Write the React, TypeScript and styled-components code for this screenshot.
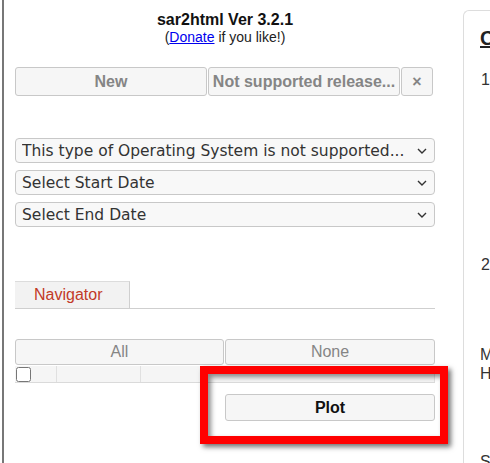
import styled, { createGlobalStyle } from 'styled-components';

const GlobalStyle = createGlobalStyle`
  html, body {
    margin: 0;
    padding: 0;
    background: #fff;
    overflow: hidden;
  }
  body {
    font-family: "Liberation Sans", Arial, sans-serif;
    color: #222;
  }
`;

const Page = styled.div`
  display: flex;
  align-items: flex-start;
  height: 463px;
  overflow: hidden;
`;

const Sidebar = styled.div`
  position: relative;
  flex: 0 0 auto;
  width: 420px;
  height: 463px;
  margin-left: 2px;
  padding: 10px 11px 0;
  border-left: 2px solid #777;
`;

const Title = styled.div`
  text-align: center;
  font-size: 16px;
  line-height: 19px;
  font-weight: bold;
  color: #111;
`;

const Sub = styled.div`
  text-align: center;
  font-size: 14px;
  line-height: 17px;
  color: #222;
  a {
    color: #0000ee;
    text-decoration: underline;
  }
`;

const ButtonRow = styled.div<{ $cols: string; $top: number }>`
  display: grid;
  grid-template-columns: ${(p) => p.$cols};
  gap: 1px;
  margin-top: ${(p) => p.$top}px;
`;

const Button = styled.button<{ $bold?: boolean; $dark?: boolean; $h?: number }>`
  box-sizing: border-box;
  height: ${(p) => p.$h ?? 26}px;
  margin: 0;
  padding: 0 3px;
  border: 1px solid #c8c8c8;
  border-radius: 3px;
  background: #f6f6f6;
  color: ${(p) => (p.$dark ? '#111' : '#858585')};
  font-family: "Liberation Sans", Arial, sans-serif;
  font-size: 16px;
  font-weight: ${(p) => (p.$bold ? 'bold' : 'normal')};
  white-space: nowrap;
  overflow: hidden;
  text-overflow: ellipsis;
`;

const CloseButton = styled(Button)`
  font-size: 16px;
`;

const SelectStack = styled.div`
  display: flex;
  flex-direction: column;
  gap: 7px;
  margin-top: 42px;
`;

const SelectWrap = styled.div`
  position: relative;
  width: 420px;
  height: 25px;
`;

const Select = styled.select`
  box-sizing: border-box;
  appearance: none;
  width: 100%;
  height: 100%;
  margin: 0;
  padding: 0 26px 0 6px;
  border: 1px solid #c8c8c8;
  border-radius: 4px;
  background: #f8f8f8;
  color: #333;
  font-family: "DejaVu Sans", sans-serif;
  font-size: 15.5px;
  text-overflow: ellipsis;
`;

const Chevron = styled.svg`
  position: absolute;
  right: 8px;
  top: 10px;
  width: 10px;
  height: 6px;
  pointer-events: none;
`;

const Tabs = styled.div`
  display: flex;
  margin-top: 54px;
  border-bottom: 1px solid #cfcfcf;
`;

const Tab = styled.div`
  box-sizing: border-box;
  width: 115px;
  height: 27px;
  padding-left: 19px;
  border-top: 1px solid #dcdcdc;
  border-right: 1px solid #cfcfcf;
  background: #f2f2f2;
  color: #c23a28;
  font-size: 16px;
  line-height: 26px;
`;

const TableRow = styled.div`
  display: grid;
  grid-template-columns: 42px 84px 1fr;
  height: 16px;
  margin-top: 1px;
  background: #f5f5f5;
  border-bottom: 1px solid #dadada;
`;

const Cell = styled.div`
  display: flex;
  align-items: center;
  border-right: 1px solid #e0e0e0;
`;

const Check = styled.input`
  box-sizing: border-box;
  width: 15px;
  height: 15px;
  margin: 0 0 0 1px;
`;

const PlotRow = styled.div`
  display: grid;
  grid-template-columns: 209px 210px;
  gap: 1px;
  margin-top: 11px;
`;

const Highlight = styled.div`
  position: absolute;
  left: 196px;
  top: 366px;
  width: 232px;
  height: 62px;
  border: 8px solid #ff0000;
  box-shadow: 3px 3px 5px rgba(0, 0, 0, 0.55), inset 3px 3px 5px rgba(0, 0, 0, 0.45);
  pointer-events: none;
`;

const Help = styled.div`
  flex: 0 0 auto;
  width: 420px;
  height: 460px;
  margin: 10px 0 0 17px;
  padding: 16px 0 0 16px;
  border-left: 1px solid #dddddd;
  border-top: 1px solid #dddddd;
  border-top-left-radius: 6px;
  font-size: 16px;
  line-height: 18.5px;
  color: #333;
`;

const HelpTitle = styled.div`
  font-size: 20px;
  line-height: 23px;
  font-weight: bold;
  text-decoration: underline;
  color: #222;
`;

const Item = styled.div<{ $top: number }>`
  display: grid;
  grid-template-columns: 24px 1fr;
  margin-top: ${(p) => p.$top}px;
`;

const Marker = styled.span`
  padding-left: 1px;
`;

const Line = styled.div`
  white-space: nowrap;
`;

const Para = styled.div<{ $top: number; $indent?: number }>`
  margin-top: ${(p) => p.$top}px;
  padding-left: ${(p) => p.$indent ?? 0}px;
`;

const stepOne = [
  'Collect sar data from your server with sar2ascii',
  'tool and upload the generated archive here.',
  'The archive must include sar data files',
  'and the hostname, OS type and release.',
  '',
  'sar2ascii is in the sar2html package',
  'and can be run as root on the server.',
  '',
  'Supported: HPUX, Linux, Solaris',
  'and AIX operating systems.'
];

const stepTwo = [
  'Select the host, start date and end date',
  'then choose the graphs to draw from the',
  'navigator and click the Plot button.',
  ''
];

function DateSelect({ label }: { label: string }) {
  return (
    <SelectWrap>
      <Select defaultValue={label}>
        <option value={label}>{label}</option>
      </Select>
      <Chevron viewBox="0 0 10 6">
        <path d="M1 1 L5 5 L9 1" fill="none" stroke="#333" strokeWidth="1.4" />
      </Chevron>
    </SelectWrap>
  );
}

export default function App() {
  return (
    <>
      <GlobalStyle />
      <Page>
        <Sidebar>
          <Title>sar2html Ver 3.2.1</Title>
          <Sub>
            (<a href="#donate">Donate</a> if you like!)
          </Sub>

          <ButtonRow $cols="192px 192px 32px" $top={21}>
            <Button $bold $h={29}>New</Button>
            <Button $bold $h={29}>Not supported release...</Button>
            <CloseButton $bold $h={29}>×</CloseButton>
          </ButtonRow>

          <SelectStack>
            <DateSelect label="This type of Operating System is not supported..." />
            <DateSelect label="Select Start Date" />
            <DateSelect label="Select End Date" />
          </SelectStack>

          <Tabs>
            <Tab>Navigator</Tab>
          </Tabs>

          <ButtonRow $cols="209px 210px" $top={30}>
            <Button>All</Button>
            <Button>None</Button>
          </ButtonRow>

          <TableRow>
            <Cell>
              <Check type="checkbox" />
            </Cell>
            <Cell />
            <Cell />
          </TableRow>

          <PlotRow>
            <span />
            <Button $bold $dark $h={27}>Plot</Button>
          </PlotRow>

          <Highlight />
        </Sidebar>

        <Help>
          <HelpTitle>Collecting data</HelpTitle>
          <Item $top={21}>
            <Marker>1.</Marker>
            <div>
              {stepOne.map((l, i) => (
                <Line key={i}>{l || '\u00a0'}</Line>
              ))}
            </div>
          </Item>
          <Item $top={0}>
            <Marker>2.</Marker>
            <div>
              {stepTwo.map((l, i) => (
                <Line key={i}>{l || '\u00a0'}</Line>
              ))}
            </div>
          </Item>
          <Para $top={16}>
            <Line>Make sure that sysstat is installed on the server.</Line>
            <Line>How to collect the data with sar2ascii:</Line>
          </Para>
          <Para $top={0} $indent={30}>
            <Line>sh sar2ascii</Line>
            <Line>&nbsp;</Line>
            <Line>&nbsp;</Line>
          </Para>
          <Para $top={14}>
            <Line>See the documentation for more details.</Line>
          </Para>
        </Help>
      </Page>
    </>
  );
}
